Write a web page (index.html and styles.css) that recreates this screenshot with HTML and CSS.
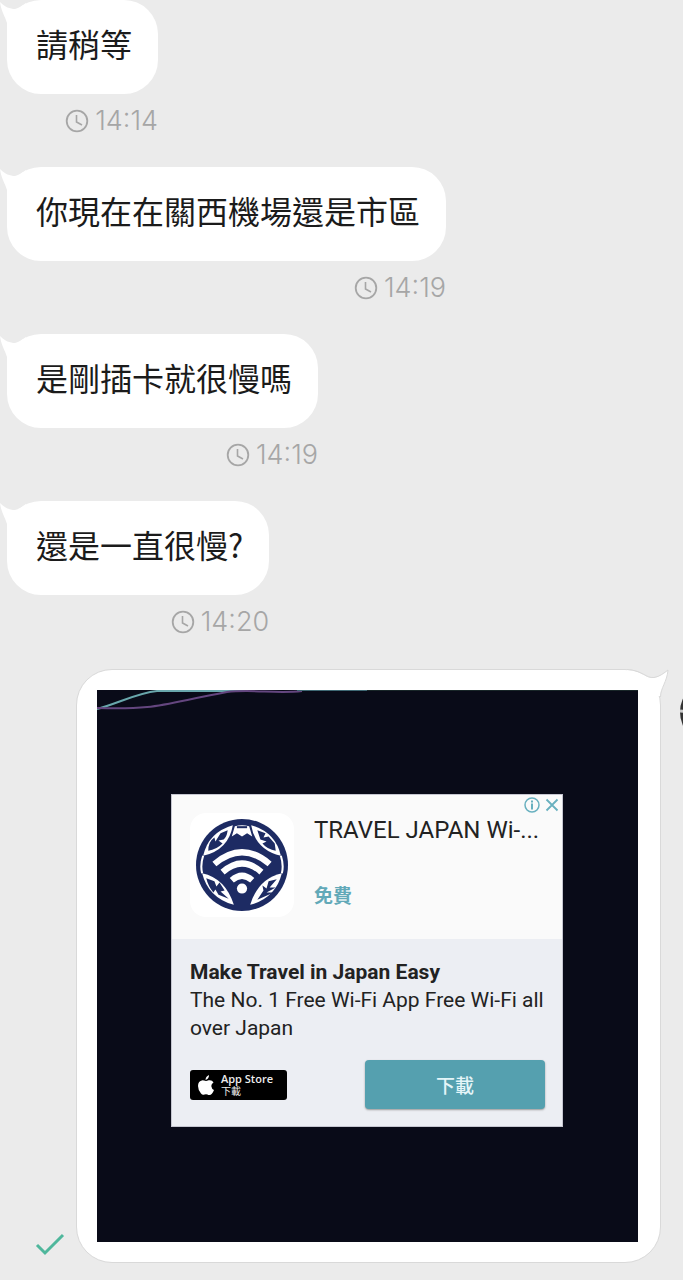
FILE: index.html
```html
<!DOCTYPE html>
<html lang="zh-Hant">
<head>
    <meta charset="UTF-8">
    <meta name="viewport" content="width=device-width, initial-scale=1.0">
    <title>Chat</title>
    <link rel="stylesheet" href="styles.css">
</head>
<body>

    <!-- Shared shapes -->
    <svg class="sprite" aria-hidden="true">
        <symbol id="clock" viewBox="0 0 24 24">
            <circle cx="12" cy="12" r="10.3" fill="none" stroke="currentColor" stroke-width="1.8"/>
            <path d="M11.5 6v7l5.5 3" fill="none" stroke="currentColor" stroke-width="1.6"/>
        </symbol>
        <symbol id="tail" viewBox="0 0 30 40">
            <path d="M0 2C5 7 10 9 15 9C19 8 22 6 26 3L30 10V40L7 36V23C5 16 1 11 0 2Z" fill="#fff"/>
        </symbol>
    </svg>

    <main class="chat">
        <!-- Received messages -->
        <div class="message">
            <p class="bubble"><svg class="tail"><use href="#tail"/></svg>請稍等</p>
            <div class="time"><svg class="clock"><use href="#clock"/></svg><time>14:14</time></div>
        </div>
        <div class="message">
            <p class="bubble"><svg class="tail"><use href="#tail"/></svg>你現在在關西機場還是市區</p>
            <div class="time"><svg class="clock"><use href="#clock"/></svg><time>14:19</time></div>
        </div>
        <div class="message">
            <p class="bubble"><svg class="tail"><use href="#tail"/></svg>是剛插卡就很慢嗎</p>
            <div class="time"><svg class="clock"><use href="#clock"/></svg><time>14:19</time></div>
        </div>
        <div class="message">
            <p class="bubble"><svg class="tail"><use href="#tail"/></svg>還是一直很慢?</p>
            <div class="time"><svg class="clock"><use href="#clock"/></svg><time>14:20</time></div>
        </div>

        <!-- Sent picture -->
        <div class="sent">
            <svg class="check" viewBox="0 0 30 26"><path d="M2 13L10 21L28 3" fill="none" stroke="#4fb79c" stroke-width="3"/></svg>
            <div class="sent-bubble">
                <svg class="sent-tail" viewBox="0 0 42 28">
                    <path d="M0 1C16 2 19 10 27 9C33 8 37 4 41 1C40 13 34 19 33 27L0 28Z" fill="#fff"/>
                    <path d="M0 .5C16 1.500 19 9.500 27 8.500C33 7.500 37 4 41 1C40 13 33.500 19 33.500 28" fill="none" stroke="#d9d9d9"/>
                </svg>
                <div class="picture">
                    <svg class="waves" viewBox="0 0 541 24">
                        <path d="M0 19C22 13 40 3 60 1H150" fill="none" stroke="#69a7ac" stroke-width="2"/>
                        <path d="M0 18C60 20 65 14 130 2C155 -1 180 4 205 1" fill="none" stroke="#64467f" stroke-width="2"/>
                        <path d="M200 .5H270" stroke="#3e6873"/>
                        <path d="M270 .5H541" stroke="#182628"/>
                    </svg>
                    <article class="ad">
                        <div class="ad-controls">
                            <button class="ad-button" aria-label="Ad info"><svg viewBox="0 0 16 16"><circle cx="8" cy="8" r="7" fill="none" stroke="currentColor" stroke-width="1.5"/><path d="M8 3.500V5.500M8 6.500V12.500" stroke="currentColor" stroke-width="2"/></svg></button>
                            <button class="ad-button" aria-label="Close ad"><svg viewBox="0 0 16 16"><path d="M2.500 2.500L13.500 13.500M13.500 2.500L2.500 13.500" stroke="currentColor" stroke-width="1.8"/></svg></button>
                        </div>
                        <header class="ad-header">
                            <div class="logo">
                                <svg viewBox="0 0 90 90">
                                    <circle cx="45" cy="45" r="45" fill="#1d2b63"/>
                                    <g fill="#fff">
                                        <path d="M7 36Q12 13 36 6Q32 30 7 36Z"/>
                                        <path d="M83 36Q78 13 54 6Q58 30 83 36Z"/>
                                        <path d="M6 53Q29 58 37 84Q12 77 6 53Z"/>
                                        <path d="M84 53Q61 58 53 84Q78 77 84 53Z"/>
                                    </g>
                                    <path d="M7 36Q4 45 6 53M83 36Q86 45 84 53" fill="none" stroke="#fff" stroke-width="2"/>
                                    <g fill="#1d2b63">
                                        <path d="M12 31Q12 22 18 18L19 22L24 14L31 11Q30 18 27 20L22 21L26 24Q20 30 12 31Z"/>
                                        <path d="M60 11L68 14L66 18L71 17L77 24L78 31Q70 30 65 24L69 22L63 20Z"/>
                                        <path d="M10 58L18 61L20 66L23 62L28 70L24 71L32 78L22 74L19 69L17 72Q12 66 10 58Z"/>
                                        <path d="M79 59L72 67L78 67L69 72L76 72L60 79L66 70L65 65L69 68L71 61Z"/>
                                    </g>
                                    <path d="M38 7Q45 5 52 7L55 17L50 14L45 17L40 14L35 17Z" fill="#fff"/>
                                    <path d="M40 8H50" stroke="#1d2b63" stroke-width="2"/>
                                    <g fill="none" stroke="#fff" stroke-width="6">
                                        <path d="M18 44Q45 21 72 44"/>
                                        <path d="M26 52Q45 35 64 52"/>
                                        <path d="M35 60Q45 51 55 60"/>
                                    </g>
                                    <circle cx="45" cy="68" r="5" fill="#fff"/>
                                </svg>
                            </div>
                            <div class="ad-heading">
                                <h2>TRAVEL JAPAN Wi-...</h2>
                                <p class="price">免費</p>
                            </div>
                        </header>
                        <div class="ad-body">
                            <h3>Make Travel in Japan Easy</h3>
                            <p>The No. 1 Free Wi-Fi App Free Wi-Fi all over Japan</p>
                            <div class="ad-actions">
                                <a class="store" href="#">
                                    <svg viewBox="0 0 16 20"><path d="M11 0Q11 4 7.500 5Q7.500 1.500 11 0ZM8 6Q9 6 10.500 5.300Q14 4.500 15.500 7.500Q13 9 13.400 11.500Q13.700 14 16 15Q14 20 11.500 20Q10 20 9.500 19.500Q8 19 6.500 19.500Q4.500 20.500 3 18.500Q0 15 0 11Q0 6 4.500 5.200Q6 5.200 8 6Z" fill="#fff"/></svg>
                                    <span class="store-text">App Store<small>下載</small></span>
                                </a>
                                <button class="download">下載</button>
                            </div>
                        </div>
                    </article>
                </div>
            </div>
            <svg class="avatar" viewBox="0 0 64 64"><circle cx="32" cy="32" r="32" fill="#333"/><path d="M0 31L64 37" stroke="#ccc" stroke-width="3"/></svg>
        </div>
    </main>

</body>
</html>
```
FILE: styles.css
```css
* {
    box-sizing: border-box;
}

body {
    margin: 0;
    background-color: #ebebeb;
    font-family: Inter, "Noto Sans CJK TC", sans-serif;
    overflow-x: hidden;
}

p, h2, h3 {
    margin: 0;
}

svg {
    display: block;
    flex: none;
}

button {
    border: none;
    padding: 0;
    cursor: pointer;
}

.sprite {
    position: absolute;
    width: 0;
    height: 0;
}

.chat {
    padding-bottom: 17px;
    overflow: hidden;
}

/* Received messages */
.message {
    width: fit-content;
    max-width: 90%;
    margin-left: 7px;
    padding-bottom: 32px;
}

.bubble {
    position: relative;
    padding: 19px 26px 27px 29px;
    border-radius: 34px;
    background-color: #fff;
    color: #1b1b1b;
    font-family: "Noto Sans CJK TC", sans-serif;
    font-size: 32px;
    line-height: 48px;
}

.tail {
    position: absolute;
    top: 0;
    left: -7px;
    width: 30px;
    height: 40px;
}

.time {
    display: flex;
    justify-content: flex-end;
    align-items: center;
    gap: 6px;
    padding-top: 13px;
    color: #a6a6a6;
    font-size: 27px;
    font-weight: 300;
    line-height: 28px;
}

.clock {
    width: 24px;
    height: 24px;
}

/* Sent picture */
.sent {
    display: flex;
    align-items: flex-end;
    padding-left: 35px;
    margin-top: 1px;
}

.check {
    width: 30px;
    height: 26px;
    margin: 0 11px 5px 0;
}

.sent-bubble {
    position: relative;
    flex: 1;
    min-width: 0;
    padding: 20px 22px 20px 20px;
    border: 1px solid #d9d9d9;
    border-radius: 36px;
    background-color: #fff;
}

.sent-tail {
    position: absolute;
    top: -1px;
    right: -9px;
    width: 42px;
    height: 28px;
}

.picture {
    position: relative;
    padding: 104px 75px 115px 74px;
    background-color: #090b18;
}

.waves {
    position: absolute;
    top: 0;
    left: 0;
    width: 100%;
}

.avatar {
    align-self: flex-start;
    width: 64px;
    height: 64px;
    margin: 11px -61px 0 19px;
}

/* Ad card */
.ad {
    position: relative;
    border: 1px solid #c5c6d0;
    background-color: #eceef3;
    color: #222;
    font-family: Roboto, "Noto Sans CJK TC", sans-serif;
}

.ad-controls {
    position: absolute;
    top: 2px;
    right: 2px;
    display: flex;
    gap: 4px;
}

.ad-button {
    width: 16px;
    height: 16px;
    background: none;
    color: #68b0bf;
}

.ad-header {
    display: flex;
    gap: 20px;
    padding: 18px 18px 22px;
    background-color: #fafafa;
}

.logo {
    flex: none;
    padding: 6px;
    border-radius: 16px;
    background-color: #fff;
}

.logo svg {
    width: 92px;
    height: 92px;
}

.ad-heading h2 {
    font-size: 24px;
    font-weight: 400;
    line-height: 34px;
    white-space: nowrap;
}

.price {
    padding-top: 34px;
    color: #62a9b8;
    font-size: 19px;
    font-weight: 700;
    line-height: 32px;
}

.ad-body {
    padding: 19px 17px 17px 18px;
    font-size: 21px;
    line-height: 28px;
}

.ad-body h3 {
    font-size: 21px;
    font-weight: 700;
}

.ad-actions {
    display: flex;
    justify-content: space-between;
    align-items: center;
    padding-top: 18px;
}

.store {
    display: flex;
    align-items: center;
    gap: 7px;
    width: 97px;
    height: 30px;
    padding: 0 8px;
    border-radius: 3px;
    background-color: #000;
    color: #eee;
    text-decoration: none;
}

.store svg {
    width: 16px;
    height: 20px;
}

.store-text {
    font-family: "Open Sans", "Noto Sans CJK TC", sans-serif;
    font-size: 11px;
    font-weight: 600;
    line-height: 12px;
    white-space: nowrap;
}

.store-text small {
    display: block;
    font-size: 10px;
    font-weight: 400;
}

.download {
    width: 180px;
    height: 49px;
    border-radius: 4px;
    background-color: #55a0af;
    box-shadow: 0 1px 2px #999;
    color: #e4f5f8;
    font-family: "Noto Sans CJK TC", sans-serif;
    font-size: 19px;
    font-weight: 500;
}
```
